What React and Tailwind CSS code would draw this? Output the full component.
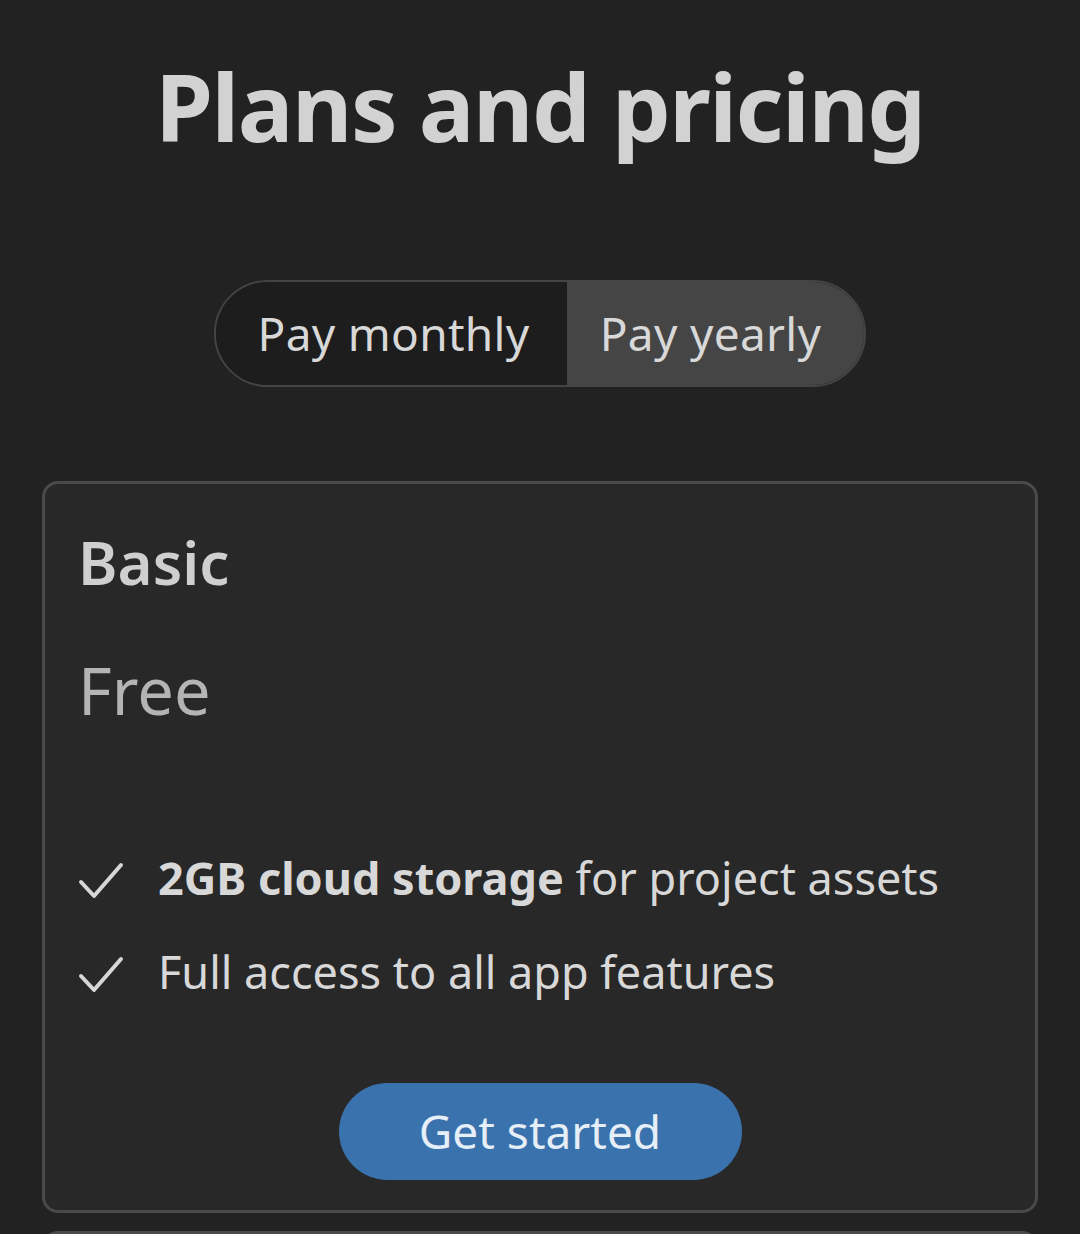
import React from 'react'

function Check() {
  return (
    <svg width="46" height="40" viewBox="0 0 46 40" fill="none" className="shrink-0 mt-[6px]">
      <path d="M3 21 L16 35 L43 4" stroke="#d6d6d6" strokeWidth="4" strokeLinecap="round" strokeLinejoin="round" />
    </svg>
  )
}

export default function App() {
  return (
    <div className="min-h-[1234px] bg-[#222222] text-[#d4d4d4] overflow-hidden" style={{ fontFamily: '"Noto Sans", "Open Sans", sans-serif' }}>
      <h1 className="pt-[46px] text-center font-bold text-[93px] leading-[120px] tracking-[-1.5px] text-[#d2d2d2]">
        Plans and pricing
      </h1>

      <div className="mt-[114px] flex justify-center">
        <div className="flex h-[107px] rounded-full border-2 border-[#444444] overflow-hidden">
          <button className="w-[351px] bg-[#1d1d1d] text-[46px] text-[#d8d8d8] pl-[4px] tracking-[0.3px]">Pay monthly</button>
          <button className="w-[297px] bg-[#454545] text-[46px] text-[#d8d8d8] pr-[10px] tracking-[0.3px]">Pay yearly</button>
        </div>
      </div>

      <div className="mx-[42px] mt-[94px] rounded-[16px] border-[3px] border-[#4a4a4a] bg-[#282828] px-[33px] pt-[38px] pb-[30px]">
        <h2 className="text-[60px] leading-[80px] font-semibold text-[#cfcfcf]">Basic</h2>
        <div className="mt-[46px] text-[65px] leading-[84px] text-[#b4b4b4]">Free</div>

        <ul className="mt-[113px] flex flex-col gap-[28px]">
          <li className="flex items-center gap-[34px] text-[45px] leading-[66px] text-[#d8d8d8]">
            <Check />
            <span><b className="font-bold">2GB cloud storage</b> for project assets</span>
          </li>
          <li className="flex items-center gap-[34px] text-[45px] leading-[66px] text-[#d8d8d8]">
            <Check />
            <span>Full access to all app features</span>
          </li>
        </ul>

        <div className="mt-[78px] flex justify-center">
          <button className="h-[97px] w-[403px] rounded-full bg-[#3a72ad] text-[46px] text-[#e6eef7]">Get started</button>
        </div>
      </div>

      <div className="mx-[42px] mt-[18px] h-[60px] rounded-t-[16px] border-x-[3px] border-t-[3px] border-[#4a4a4a] bg-[#282828]" />
    </div>
  )
}
